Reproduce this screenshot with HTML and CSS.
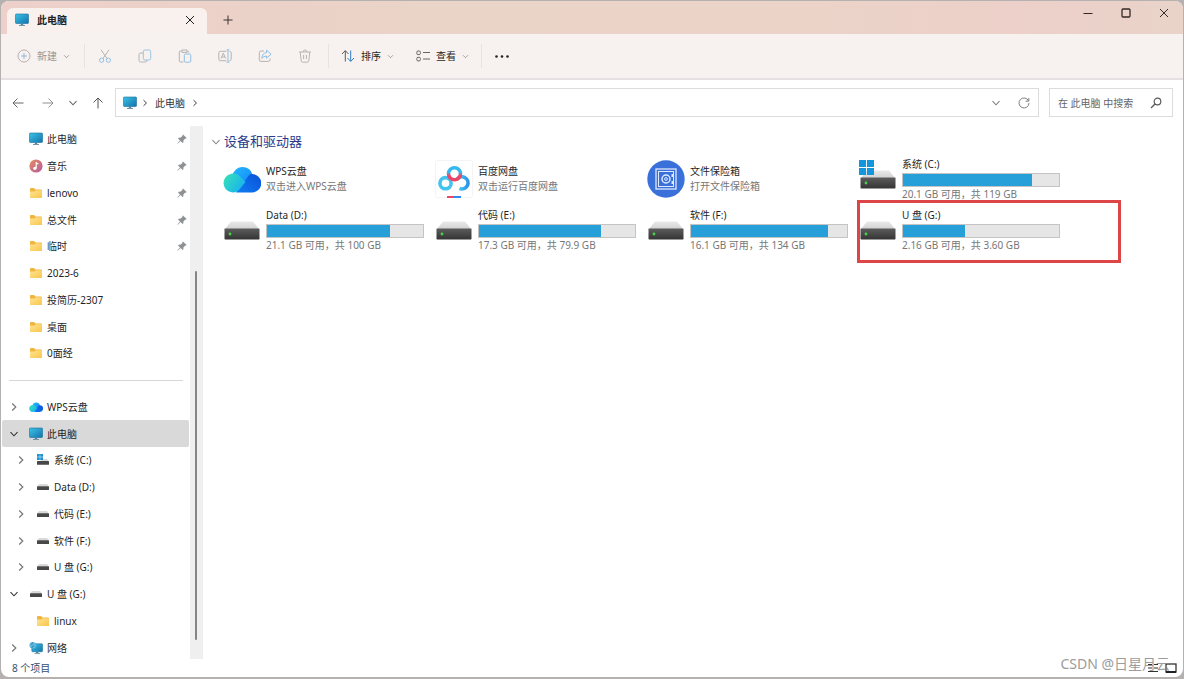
FILE: index.html
```html
<!DOCTYPE html>
<html lang="zh-CN">
<head>
<meta charset="utf-8">
<title>此电脑</title>
<link rel="stylesheet" href="styles.css">
</head>
<body>
<svg class="defs" aria-hidden="true">
  <defs>
    <linearGradient id="gScreen" x1="0" y1="0" x2="1" y2="1"><stop offset="0" stop-color="#3cc3e6"/><stop offset="1" stop-color="#1173ad"/></linearGradient>
    <linearGradient id="gFolder" x1="0" y1="0" x2="1" y2="1"><stop offset="0" stop-color="#ffe394"/><stop offset="1" stop-color="#f8c74c"/></linearGradient>
    <linearGradient id="gMusic" x1="0" y1="0" x2="1" y2="1"><stop offset="0" stop-color="#e98d5d"/><stop offset="1" stop-color="#b45aa0"/></linearGradient>
    <linearGradient id="gTop" x1="0" y1="0" x2="0" y2="1"><stop offset="0" stop-color="#e9e9e9"/><stop offset="1" stop-color="#d2d2d2"/></linearGradient>
    <linearGradient id="gFront" x1="0" y1="0" x2="0" y2="1"><stop offset="0" stop-color="#5c5c5c"/><stop offset="1" stop-color="#343434"/></linearGradient>
    <linearGradient id="gCloudL" x1="0" y1="0.2" x2="1" y2="0.8"><stop offset="0" stop-color="#35e0b8"/><stop offset="1" stop-color="#15aef5"/></linearGradient>
    <linearGradient id="gCloudT" x1="0" y1="0" x2="1" y2="1"><stop offset="0" stop-color="#22b8ff"/><stop offset="1" stop-color="#1584f5"/></linearGradient>
    <linearGradient id="gCloudR" x1="0" y1="1" x2="1" y2="0"><stop offset="0" stop-color="#0f7df2"/><stop offset="1" stop-color="#0a50d8"/></linearGradient>
    <linearGradient id="gPan" x1="0" y1="0" x2="1" y2="0"><stop offset="0" stop-color="#4ad0f2"/><stop offset="1" stop-color="#2a94ea"/></linearGradient>
    <linearGradient id="gPanTop" x1="0" y1="0" x2="0" y2="1"><stop offset="0.4" stop-color="#38b6f0"/><stop offset="0.65" stop-color="#ee4468"/></linearGradient>
  </defs>
  <symbol id="pc" viewBox="0 0 14 13"><rect x="0.5" y="0.5" width="13" height="9.5" rx="0.8" fill="url(#gScreen)" stroke="#176f9b" stroke-width="0.6"/><path d="M5.8 10h2.4v1.6H5.8z" fill="#4c86a4"/><path d="M4 12h6" stroke="#7594a6"/></symbol>
  <symbol id="folder" viewBox="0 0 14 12"><path d="M1 2q0-1 1-1h3l1.5 1.5H12q1 0 1 1V10q0 1-1 1H2q-1 0-1-1z" fill="#efb53d"/><path d="M1 4.4h4.5L7 3.2h5q1 0 1 1V10q0 1-1 1H2q-1 0-1-1z" fill="url(#gFolder)"/></symbol>
  <symbol id="music" viewBox="0 0 14 14"><circle cx="7" cy="7" r="6.6" fill="url(#gMusic)"/><path d="M7.2 9.3V3.2q.4 1.5 2.3 1.8" fill="none" stroke="#fff" stroke-width="1.2"/><circle cx="5.9" cy="9.3" r="1.6" fill="#fff"/></symbol>
  <symbol id="cloud" viewBox="0 0 38 30"><path d="M9.500 12a10.200 10.200 0 0 1 20-1.500L27 22H14z" fill="url(#gCloudT)"/><path d="M13 28.500L24 14q2-4 5-4a9.200 9.200 0 0 1 0 18.500z" fill="url(#gCloudR)"/><path d="M10 28.500a9.500 9.500 0 1 1 7-16l5.500 5.500-6.500 8q-2.500 2.500-6 2.500z" fill="url(#gCloudL)"/></symbol>
  <symbol id="drive" viewBox="0 0 36 19"><path d="M7 .5h22L35 8H1z" fill="url(#gTop)"/><rect x=".5" y="7.5" width="35" height="11" rx=".8" fill="url(#gFront)"/><circle cx="6" cy="13" r="1.4" fill="#45d449"/></symbol>
  <symbol id="drive-s" viewBox="0 0 12 7"><path d="M2 .4h8L12 3H0z" fill="#d9d9d9"/><rect y="2.8" width="12" height="3.7" rx=".5" fill="#484848"/></symbol>
  <symbol id="win" viewBox="0 0 16 16"><path d="M0 0h7.5v7.5H0zM8.5 0H16v7.5H8.5zM0 8.5h7.5V16H0zM8.5 8.5H16V16H8.5z" fill="#1596dc"/></symbol>
  <symbol id="drive-c" viewBox="0 0 12 12"><path d="M5 5h5l2 2.5H3z" fill="#d9d9d9"/><rect y="7" width="12" height="3.7" rx=".5" fill="#484848"/><path d="M0 0h2.8v2.8H0zM3.2 0H6v2.8H3.2zM0 3.2h2.8V6H0zM3.2 3.2H6V6H3.2z" fill="#1b91d2"/></symbol>
  <symbol id="net" viewBox="0 0 15 14"><rect x="3" y="2.5" width="11.5" height="8.5" rx=".8" fill="url(#gScreen)" stroke="#176f9b" stroke-width=".6"/><path d="M7.5 11h2.6v1.3H7.5z" fill="#4c86a4"/><path d="M6 13h6" stroke="#7594a6"/><circle cx="4" cy="4" r="3.5" fill="#63b9dc"/><path d="M2 3q2 .4 2-2M3 7q0-2 2.5-2.4" stroke="#2b81b5" fill="none"/></symbol>
  <symbol id="down" viewBox="0 0 10 10"><path d="M1.5 3.2L5 6.8l3.5-3.6" fill="none" stroke="currentColor" stroke-width="1.1"/></symbol>
  <symbol id="right" viewBox="0 0 10 10"><path d="M3.2 1.5L6.8 5 3.2 8.5" fill="none" stroke="currentColor" stroke-width="1.2"/></symbol>
  <symbol id="pin" viewBox="0 0 10 10"><path d="M6 .4L9.6 4 8.9 4.7 8.3 4.5 6.5 6.3 6.3 8.500 5.6 9 3.700 7.100.7 9.800.3 9.400 3 6.400 1.100 4.500 1.600 3.800 3.800 3.600 5.600 1.800 5.400 1.100z" fill="#8e9194"/></symbol>
  <symbol id="x" viewBox="0 0 10 10"><path d="M1 1l8 8M9 1L1 9" stroke="currentColor" fill="none"/></symbol>
</svg>

<div class="window">
  <header class="titlebar">
    <div class="tab">
      <svg class="i14"><use href="#pc"/></svg>
      <span class="tab-name">此电脑</span>
      <button class="icon-btn" aria-label="关闭标签页"><svg class="i10"><use href="#x"/></svg></button>
    </div>
    <button class="new-tab" aria-label="新建标签页"><svg class="i10" viewBox="0 0 10 10"><path d="M5 .5v9M.5 5h9" stroke="#3a3230" fill="none"/></svg></button>
    <div class="win-buttons">
      <button aria-label="最小化"><svg class="i10" viewBox="0 0 10 10"><path d="M.5 5.5h9" stroke="#352825" stroke-width="1.2"/></svg></button>
      <button aria-label="最大化"><svg class="i10" viewBox="0 0 10 10"><rect x="1" y="1" width="8" height="8" rx="1" fill="none" stroke="#352825" stroke-width="1.3"/></svg></button>
      <button aria-label="关闭"><svg class="i10"><use href="#x"/></svg></button>
    </div>
  </header>

  <div class="toolbar">
    <button class="cmd cmd-new off"><svg class="i14" viewBox="0 0 14 14" fill="none"><circle cx="7" cy="7" r="6" stroke="#b3b1b0"/><path d="M7 4v6M4 7h6" stroke="#8db9dc"/></svg>新建<svg class="i7"><use href="#down"/></svg></button>
    <span class="sep"></span>
    <button class="tool" aria-label="剪切"><svg class="i14" viewBox="0 0 14 14" fill="none"><path d="M3 .8l6.3 9M11 .8L4.7 9.8" stroke="#b5b3b2"/><circle cx="3.6" cy="11.2" r="2.1" stroke="#8fbfe4"/><circle cx="10.4" cy="11.2" r="2.1" stroke="#8fbfe4"/></svg></button>
    <button class="tool" aria-label="复制"><svg class="i14" viewBox="0 0 14 14" fill="none"><path d="M5 4H2.6Q1 4 1 5.6v5.8Q1 13 2.6 13h4.8Q9 13 9 11" stroke="#b5b3b2"/><rect x="5.3" y="1" width="7.4" height="10" rx="1.6" stroke="#9ac4e4"/></svg></button>
    <button class="tool" aria-label="粘贴"><svg class="i14" viewBox="0 0 14 14" fill="none"><path d="M5.5 13H2.6Q1.3 13 1.3 11.8V3Q1.3 2 2.6 2H4M9 2q2 0 2 1.6M4 1h5v2.4H4z" stroke="#b5b3b2"/><rect x="6.3" y="5" width="6.5" height="8.2" rx="1.3" stroke="#8fbfe4"/></svg></button>
    <button class="tool" aria-label="重命名"><svg class="i14" viewBox="0 0 14 14" fill="none"><path d="M8.4 2.3H2.3Q.8 2.3.8 3.8v6.4q0 1.5 1.5 1.5h6.1M11.5 2.3q1.7 0 1.7 1.5v6.4q0 1.5-1.7 1.5" stroke="#b5b3b2"/><path d="M3 9.5l2.3-5.3 2.3 5.3M3.8 8h3" stroke="#b5b3b2"/><path d="M10 .8v12.4M8.6.8h2.8M8.6 13.2h2.8" stroke="#8fbfe4"/></svg></button>
    <button class="tool" aria-label="共享"><svg class="i14" viewBox="0 0 14 14" fill="none"><path d="M6 2H3Q1.3 2 1.3 3.7v7Q1.3 12.4 3 12.4h7.4q1.6 0 1.6-1.6V9.4" stroke="#b5b3b2"/><path d="M8.5 1.2l4.6 4-4.6 4V7Q5.6 7 3.8 9.4 4.3 4 8.5 3.6z" stroke="#8fbfe4" stroke-linejoin="round"/></svg></button>
    <button class="tool" aria-label="删除"><svg class="i14" viewBox="0 0 14 14" fill="none" stroke="#b8b5b4"><path d="M1 3h12M5 3q0-2 2-2t2 2M2.2 3l1 8.8q.2 1.4 1.6 1.4h4.4q1.4 0 1.6-1.4l1-8.8M5.6 6v4M8.4 6v4"/></svg></button>
    <span class="sep sep-wide"></span>
    <button class="cmd cmd-sort"><svg class="i14" viewBox="0 0 14 14" fill="none"><path d="M4.3 12.5V1.8M1 5l3.3-3.4L7.5 5" stroke="#5c5c5c"/><path d="M9.7 1.5v10.7M6.5 9l3.2 3.4L13 9" stroke="#2d7fc8"/></svg>排序<svg class="i7"><use href="#down"/></svg></button>
    <button class="cmd cmd-view"><svg class="i14" viewBox="0 0 14 14" fill="none" stroke="#666"><rect x=".8" y="2" width="3.6" height="3.6" rx="1.2"/><rect x=".8" y="8.3" width="3.6" height="3.6" rx="1.2"/><path d="M7 3.5h7M7 10h7"/></svg>查看<svg class="i7"><use href="#down"/></svg></button>
    <span class="sep"></span>
    <button class="tool" aria-label="更多"><svg class="i14" viewBox="0 0 14 14" fill="#222"><circle cx="1.5" cy="7.5" r="1.3"/><circle cx="7" cy="7.5" r="1.3"/><circle cx="12.5" cy="7.5" r="1.3"/></svg></button>
  </div>

  <nav class="nav" aria-label="导航">
    <button class="go" aria-label="后退"><svg class="i12" viewBox="0 0 12 12"><path d="M11.5 6H1M5.5 1.5L1 6l4.5 4.5" fill="none" stroke="#666"/></svg></button>
    <button class="go" aria-label="前进"><svg class="i12" viewBox="0 0 12 12"><path d="M.5 6H11M6.5 1.5L11 6l-4.5 4.5" fill="none" stroke="#909090"/></svg></button>
    <button class="go go-list" aria-label="最近"><svg class="i10"><use href="#down"/></svg></button>
    <button class="go" aria-label="上移"><svg class="i12" viewBox="0 0 12 12"><path d="M6 11.5V1M1.5 5.5L6 1l4.5 4.5" fill="none" stroke="#555"/></svg></button>
    <div class="address">
      <svg class="i14"><use href="#pc"/></svg>
      <svg class="i8"><use href="#right"/></svg>
      <a href="#">此电脑</a>
      <svg class="i8"><use href="#right"/></svg>
      <button class="icon-btn push" aria-label="以前的位置"><svg class="i10"><use href="#down"/></svg></button>
      <button class="icon-btn" aria-label="刷新"><svg class="i12" viewBox="0 0 12 12"><path d="M10.6 4A5 5 0 1 0 11 6M10.8 1v3.2H7.6" fill="none" stroke="#808080"/></svg></button>
    </div>
    <label class="search">
      <input type="text" placeholder="在 此电脑 中搜索" aria-label="在 此电脑 中搜索">
      <svg class="i12" viewBox="0 0 12 12" fill="none" stroke="#5c5c5c"><circle cx="7.5" cy="4.5" r="3.3" stroke-width="1.2"/><path d="M5 7l-4 4" stroke-width="1.5"/></svg>
    </label>
  </nav>

  <div class="content">
    <aside class="sidebar">
      <ul class="tree">
        <li><a href="#"><svg class="i14"><use href="#pc"/></svg>此电脑<svg class="i10 push"><use href="#pin"/></svg></a></li>
        <li><a href="#"><svg class="i14"><use href="#music"/></svg>音乐<svg class="i10 push"><use href="#pin"/></svg></a></li>
        <li><a href="#"><svg class="i14"><use href="#folder"/></svg>lenovo<svg class="i10 push"><use href="#pin"/></svg></a></li>
        <li><a href="#"><svg class="i14"><use href="#folder"/></svg>总文件<svg class="i10 push"><use href="#pin"/></svg></a></li>
        <li><a href="#"><svg class="i14"><use href="#folder"/></svg>临时<svg class="i10 push"><use href="#pin"/></svg></a></li>
        <li><a href="#"><svg class="i14"><use href="#folder"/></svg>2023-6</a></li>
        <li><a href="#"><svg class="i14"><use href="#folder"/></svg>投简历-2307</a></li>
        <li><a href="#"><svg class="i14"><use href="#folder"/></svg>桌面</a></li>
        <li><a href="#"><svg class="i14"><use href="#folder"/></svg>0面经</a></li>
        <li class="divider"></li>
        <li><a href="#" class="node"><svg class="i10"><use href="#right"/></svg><svg class="i14"><use href="#cloud"/></svg>WPS云盘</a></li>
        <li class="selected"><a href="#" class="node open"><svg class="i10"><use href="#down"/></svg><svg class="i14"><use href="#pc"/></svg>此电脑</a></li>
        <li><a href="#" class="node sub"><svg class="i10"><use href="#right"/></svg><svg class="i14 pad"><use href="#drive-c"/></svg>系统 (C:)</a></li>
        <li><a href="#" class="node sub"><svg class="i10"><use href="#right"/></svg><svg class="i14 pad"><use href="#drive-s"/></svg>Data (D:)</a></li>
        <li><a href="#" class="node sub"><svg class="i10"><use href="#right"/></svg><svg class="i14 pad"><use href="#drive-s"/></svg>代码 (E:)</a></li>
        <li><a href="#" class="node sub"><svg class="i10"><use href="#right"/></svg><svg class="i14 pad"><use href="#drive-s"/></svg>软件 (F:)</a></li>
        <li><a href="#" class="node sub"><svg class="i10"><use href="#right"/></svg><svg class="i14 pad"><use href="#drive-s"/></svg>U 盘 (G:)</a></li>
        <li><a href="#" class="node open"><svg class="i10"><use href="#down"/></svg><svg class="i14 pad"><use href="#drive-s"/></svg>U 盘 (G:)</a></li>
        <li><a href="#" class="leaf"><svg class="i14"><use href="#folder"/></svg>linux</a></li>
        <li><a href="#" class="node"><svg class="i10"><use href="#right"/></svg><svg class="i14"><use href="#net"/></svg>网络</a></li>
      </ul>
      <div class="scroll"><div class="thumb"></div></div>
    </aside>

    <main class="main">
      <h1 class="group"><svg class="i10"><use href="#down"/></svg>设备和驱动器</h1>
      <div class="grid">
        <article class="item app"><svg class="pic"><use href="#cloud"/></svg><div><h2>WPS云盘</h2><p>双击进入WPS云盘</p></div></article>
        <article class="item app">
          <svg class="pic" viewBox="0 0 38 38" fill="none"><rect x=".5" y=".5" width="37" height="37" rx="2" stroke="#f4f4f4"/><g stroke-width="3.6"><circle cx="10.5" cy="23.2" r="5.6" stroke="#43c4ef"/><path d="M22 19.500a6 6 0 1 1 2.500 8.800" stroke="url(#gPan)"/><path d="M14 19l2-2M24 19l-2-2" stroke="#38a9ee"/><circle cx="19.500" cy="13.800" r="6" stroke="url(#gPanTop)"/></g><path d="M12 37h7" stroke="#ee4468" stroke-width="2"/><path d="M19 37h7" stroke="#2e8ef0" stroke-width="2"/></svg>
          <div><h2>百度网盘</h2><p>双击运行百度网盘</p></div></article>
        <article class="item app">
          <svg class="pic" viewBox="0 0 38 38" fill="none" stroke="#dfe9ff"><circle cx="19" cy="19" r="18.7" fill="#3970da" stroke="none"/><rect x="9" y="9" width="20" height="20" stroke-width="1.3"/><rect x="11.5" y="11.5" width="15" height="15"/><circle cx="19" cy="19" r="4" stroke-width="1.5"/><circle cx="19" cy="19" r="1.4"/><path d="M25.5 14v3M25.5 21v3" stroke-width="2"/></svg>
          <div><h2>文件保险箱</h2><p>打开文件保险箱</p></div></article>
        <article class="item">
          <svg class="pic" viewBox="0 0 38 38"><use href="#drive" x="1" y="10" width="36" height="19"/><use href="#win" x="0" y="0" width="15" height="15"/></svg>
          <div><h2>系统 (C:)</h2><div class="bar"><span style="width:83%"></span></div><p>20.1 GB 可用，共 119 GB</p></div></article>
        <article class="item"><svg class="pic" viewBox="0 0 38 38"><use href="#drive" x="1" y="10" width="36" height="19"/></svg><div><h2>Data (D:)</h2><div class="bar"><span style="width:79%"></span></div><p>21.1 GB 可用，共 100 GB</p></div></article>
        <article class="item"><svg class="pic" viewBox="0 0 38 38"><use href="#drive" x="1" y="10" width="36" height="19"/></svg><div><h2>代码 (E:)</h2><div class="bar"><span style="width:78%"></span></div><p>17.3 GB 可用，共 79.9 GB</p></div></article>
        <article class="item"><svg class="pic" viewBox="0 0 38 38"><use href="#drive" x="1" y="10" width="36" height="19"/></svg><div><h2>软件 (F:)</h2><div class="bar"><span style="width:88%"></span></div><p>16.1 GB 可用，共 134 GB</p></div></article>
        <article class="item marked"><svg class="pic" viewBox="0 0 38 38"><use href="#drive" x="1" y="10" width="36" height="19"/></svg><div><h2>U 盘 (G:)</h2><div class="bar"><span style="width:40%"></span></div><p>2.16 GB 可用，共 3.60 GB</p></div></article>
      </div>
    </main>
  </div>

  <footer class="status">
    <span>8 个项目</span>
    <div class="views">
      <button aria-label="详细信息"><svg class="i12" viewBox="0 0 12 12"><path d="M1 2.5h4M7 2.5h4M1 6h4M7 6h4M1 9.5h10" stroke="#333" stroke-width="1.2"/></svg></button>
      <button aria-label="大图标"><svg class="i12" viewBox="0 0 12 12"><rect x="1" y="2" width="10" height="8" fill="none" stroke="#333" stroke-width="1.3"/><path d="M1 10h10" stroke="#222" stroke-width="2"/></svg></button>
    </div>
    <span class="watermark">CSDN @日星月云</span>
  </footer>
</div>
</body>
</html>
```

FILE: styles.css
```css
* { box-sizing: border-box; }

body {
  margin: 0;
  height: 100vh;
  display: flex;
  background: #b4b1b0;
  font: 10px/14px "Noto Sans", "Noto Sans CJK SC", sans-serif;
  color: #1f1f1f;
}

.defs { position: absolute; width: 0; height: 0; }

button {
  border: 0;
  padding: 0;
  background: none;
  font: inherit;
  color: inherit;
  display: flex;
  align-items: center;
  justify-content: center;
}

a { color: inherit; text-decoration: none; }
svg { flex: none; display: block; }
.i7 { width: 7px; height: 7px; }
.i8 { width: 8px; height: 8px; }
.i10 { width: 10px; height: 10px; }
.i12 { width: 12px; height: 12px; }
.i14 { width: 14px; height: 14px; }
.pad { padding: 0 1px; }
.push { margin-left: auto; }
.icon-btn { width: 24px; height: 24px; }

.window {
  flex: 1;
  display: flex;
  flex-direction: column;
  margin: 1px 1px 2px;
  border-radius: 8px;
  overflow: hidden;
  background: #fff;
}

/* Title bar */
.titlebar {
  height: 33px;
  flex: none;
  display: flex;
  align-items: flex-end;
  background: linear-gradient(90deg, #edd0ca, #ead3c7 35%, #ebd3c8 70%, #ecd0c9 86%, #e9d3c9);
}

.tab {
  width: 200px;
  height: 26px;
  margin-left: 6px;
  padding: 0 5px 2px 8px;
  display: flex;
  align-items: center;
  gap: 8px;
  border-radius: 6px 6px 0 0;
  background: #f8f1ee;
}

.tab-name { flex: 1; font-weight: 700; }
.new-tab { width: 42px; height: 28px; }
.win-buttons { display: flex; margin-left: auto; align-self: flex-start; color: #352825; }
.win-buttons button { width: 38px; height: 24px; }

/* Command bar */
.toolbar {
  height: 46px;
  flex: none;
  display: flex;
  align-items: center;
  background: #f7f2ef;
  border-bottom: 2px solid #e5e1e2;
}

.cmd { height: 30px; gap: 6px; padding: 0 12px; }
.cmd svg:last-child { color: #8a8a8a; }
.cmd-new { padding: 0 14px 0 16px; }
.cmd-sort { padding-right: 10px; }
.off { color: #999694; }
.tool { width: 40px; height: 30px; }
.sep { width: 1px; height: 24px; background: #e8e3e0; }
.sep-wide { margin-left: 3px; }

/* Address row */
.nav {
  height: 46px;
  flex: none;
  display: flex;
  align-items: center;
  padding: 0 10px 1px 2px;
}

.go { width: 30px; height: 28px; color: #666; }
.go-list { width: 20px; }

.address, .search {
  height: 29px;
  display: flex;
  align-items: center;
  border: 1px solid #dcdcdc;
  background: #fff;
}

.address {
  flex: 1;
  margin-left: 2px;
  gap: 4px;
  padding: 0 2px 0 7px;
  color: #333;
}

.address a { margin: 0 2px; }
.address .icon-btn { color: #808080; }

.search { width: 124px; margin-left: 10px; padding: 0 10px 0 8px; }

.search input {
  flex: 1;
  min-width: 0;
  border: 0;
  padding: 0;
  outline: 0;
  background: none;
  font: inherit;
}

.search input::placeholder { color: #666; opacity: 1; }

/* Body */
.content { flex: 1; min-height: 0; display: flex; }
.sidebar { width: 202px; flex: none; display: flex; }

.tree {
  flex: 1;
  margin: 0;
  padding: 0 1px;
  list-style: none;
  display: flex;
  flex-direction: column;
}

.tree li { flex: 1; display: flex; border-radius: 2px; }

.tree a {
  flex: 1;
  display: flex;
  align-items: center;
  gap: 4px;
  padding: 0 2px 0 27px;
}

.tree a.node { padding-left: 7px; }
.tree .node .i10 { margin-right: 6px; color: #777; }
.tree .open .i10 { color: #333; }
.tree a.sub { padding-left: 14px; }
.tree a.leaf { padding-left: 34px; }
.tree .selected { background: #d9d9d9; }
.tree .divider { margin: 0 6px 0 7px; align-items: center; }
.tree .divider::before { content: ""; flex: 1; height: 1px; background: #d8d8d8; }

.scroll { width: 13px; margin-bottom: 2px; padding: 145px 0 19px 5px; background: #efefef; }
.thumb { width: 2px; height: 100%; border-radius: 1px; background: #858585; }

.main { flex: 1; min-width: 0; padding: 6px 0 0 8px; }

.group {
  margin: 0 0 2px;
  display: flex;
  align-items: center;
  gap: 3px;
  font-size: 13px;
  line-height: 19px;
  font-weight: 400;
  color: #2c3a8c;
}

.group svg { color: #888; }

.grid {
  display: grid;
  grid-template-columns: repeat(auto-fill, 212px);
  grid-auto-rows: 51px;
  padding-left: 12px;
}

.item { position: relative; display: flex; align-items: center; gap: 5px; }
.item > div { width: 158px; }
.pic { width: 38px; height: 38px; }
.item h2, .item p { margin: 0; font-size: 10px; line-height: 14px; font-weight: 400; white-space: nowrap; }
.item p { color: #777; }
.app h2, .app p { line-height: 15px; }

.bar { height: 14px; margin-top: 2px; border: 1px solid #c4c4c4; background: #e6e6e6; }
.bar span { display: block; height: 100%; background: #279fd9; }

.marked::after {
  content: "";
  position: absolute;
  inset: -4px -50px -8px -2px;
  border: 3px solid #dd4546;
}

/* Status bar */
.status {
  position: relative;
  height: 16px;
  flex: none;
  display: flex;
  align-items: center;
  justify-content: space-between;
  padding: 0 6px 2px 11px;
  color: #35506f;
}

.views { display: flex; gap: 6px; }

.watermark {
  position: absolute;
  right: 13px;
  bottom: 4px;
  font-size: 14px;
  line-height: 18px;
  color: #8b8b8b;
  opacity: 0.85;
}
```
